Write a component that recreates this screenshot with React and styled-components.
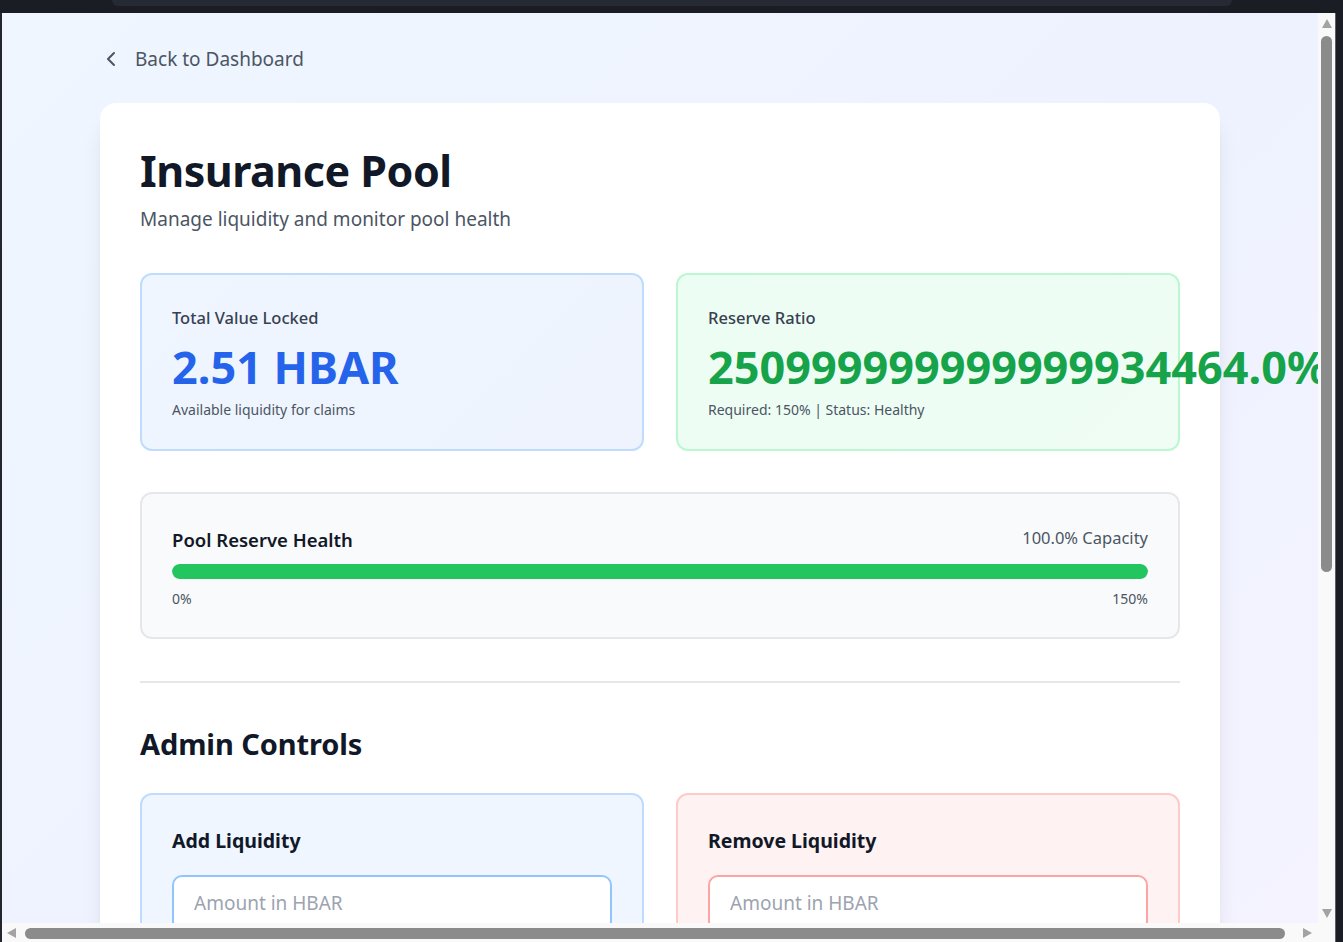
import React from "react";
import styled, { createGlobalStyle } from "styled-components";

const Global = createGlobalStyle`
  html, body { margin: 0; padding: 0; overflow: hidden; background: #1b1d25; }
  body { font-family: "Noto Sans", "Open Sans", sans-serif; }
  * { box-sizing: border-box; }
`;

/* ---------- browser frame ---------- */
const Shell = styled.div`
  width: 1343px;
  height: 942px;
  display: flex;
  flex-direction: column;
  background: #1b1d25;
`;
const TopBar = styled.div`
  height: 13px;
  flex: none;
  padding-left: 112px;
  background: #1b1d25;
`;
const TabEdge = styled.div`
  width: 1120px;
  height: 6px;
  background: #262a34;
  border-radius: 0 0 6px 6px;
`;
const Middle = styled.div`
  height: 910px;
  flex: none;
  display: flex;
`;
const LeftEdge = styled.div`
  width: 2px;
  flex: none;
  background: #24262d;
`;
const RightEdge = styled.div`
  width: 8px;
  flex: none;
  background: #1b1d25;
  border-left: 1px solid #5d5f66;
`;
const Viewport = styled.div`
  width: 1316px;
  flex: none;
  overflow: hidden;
  position: relative;
`;
const VScroll = styled.div`
  width: 17px;
  flex: none;
  background: #f9f9f9;
  display: flex;
  flex-direction: column;
  align-items: center;
  padding: 6px 0 5px;
`;
const ArrowUp = styled.div`
  width: 0;
  height: 0;
  border-left: 5.5px solid transparent;
  border-right: 5.5px solid transparent;
  border-bottom: 9px solid #a3a3a3;
`;
const ArrowDown = styled(ArrowUp)`
  border-bottom: 0;
  border-top: 9px solid #a3a3a3;
  margin-top: auto;
`;
const VThumb = styled.div`
  width: 11px;
  height: ${(p) => p.$len}px;
  margin-top: 8px;
  border-radius: 6px;
  background: #8b8b8b;
`;
const BottomRow = styled.div`
  height: 19px;
  flex: none;
  display: flex;
`;
const HScroll = styled.div`
  flex: 1;
  background: #f9f9f9;
  display: flex;
  align-items: flex-start;
  padding: 5px 0 0 5px;
`;
const ArrowLeft = styled.div`
  width: 0;
  height: 0;
  border-top: 5.5px solid transparent;
  border-bottom: 5.5px solid transparent;
  border-right: 9px solid #a3a3a3;
`;
const ArrowRight = styled.div`
  width: 0;
  height: 0;
  margin-left: 18px;
  border-top: 5.5px solid transparent;
  border-bottom: 5.5px solid transparent;
  border-left: 9px solid #a3a3a3;
`;
const HThumb = styled.div`
  width: ${(p) => p.$len}px;
  height: 11px;
  margin-left: 9px;
  border-radius: 6px;
  background: #8b8b8b;
`;

/* ---------- page ---------- */
const Page = styled.div`
  min-height: 100%;
  padding: 32px 0 48px;
  background: linear-gradient(135deg, #eff6ff 0%, #eef2ff 55%, #f5f3ff 100%);
`;
const Container = styled.div`
  max-width: 1120px;
  margin: 0 auto;
`;
const BackLink = styled.a`
  display: flex;
  width: fit-content;
  align-items: center;
  gap: 12px;
  height: 28px;
  margin-left: -1px;
  color: #4b5563;
  font-size: 19px;
  line-height: 28px;
  text-decoration: none;
  cursor: pointer;
`;
const Card = styled.section`
  margin-top: 30px;
  background: #ffffff;
  border-radius: 16px;
  padding: 40px;
  box-shadow: 0 20px 25px -5px rgba(0, 0, 0, 0.1), 0 8px 10px -6px rgba(0, 0, 0, 0.1);
`;
const Title = styled.h1`
  margin: 0;
  font-size: 43px;
  line-height: 56px;
  font-weight: 700;
  letter-spacing: -0.5px;
  color: #111827;
`;
const Subtitle = styled.p`
  margin: 8px 0 0;
  font-size: 19px;
  line-height: 24px;
  color: #4b5563;
`;
const TwoCols = styled.div`
  display: grid;
  grid-template-columns: 1fr 1fr;
  gap: 32px;
  margin-top: ${(p) => p.$top || 0}px;
`;
const StatCard = styled.div`
  min-width: 0;
  border: 2px solid ${(p) => p.$border};
  background: linear-gradient(135deg, ${(p) => p.$from}, ${(p) => p.$to});
  border-radius: 12px;
  padding: 30px;
`;
const StatLabel = styled.div`
  font-size: 16.5px;
  line-height: 26px;
  font-weight: 500;
  color: #374151;
`;
const StatValue = styled.div`
  margin-top: 8px;
  font-size: 45px;
  line-height: 56px;
  font-weight: 700;
  white-space: nowrap;
  color: ${(p) => p.$color};
`;
const StatNote = styled.div`
  margin-top: 6px;
  font-size: 14px;
  line-height: 18px;
  color: #4b5563;
`;
const HealthCard = styled.div`
  margin-top: 41px;
  background: #f9fafb;
  border: 2px solid #e5e7eb;
  border-radius: 12px;
  padding: 30px;
`;
const HealthHeader = styled.div`
  display: flex;
  justify-content: space-between;
  align-items: flex-start;
  height: 32px;
`;
const HealthTitle = styled.div`
  font-size: 18.5px;
  line-height: 32px;
  font-weight: 600;
  color: #111827;
`;
const Capacity = styled.div`
  font-size: 16.5px;
  line-height: 28px;
  color: #4b5563;
`;
const Track = styled.div`
  margin-top: 8px;
  height: 15px;
  border-radius: 999px;
  background: #e5e7eb;
  overflow: hidden;
`;
const Fill = styled.div`
  height: 100%;
  border-radius: 999px;
  background: #22c55e;
`;
const Scale = styled.div`
  margin-top: 12px;
  display: flex;
  justify-content: space-between;
  font-size: 14px;
  line-height: 16px;
  color: #4b5563;
`;
const Divider = styled.hr`
  margin: 42px 0 0;
  border: 0;
  height: 2px;
  background: #e5e7eb;
`;
const SectionTitle = styled.h2`
  margin: 43px 0 31px;
  font-size: 29px;
  line-height: 36px;
  font-weight: 700;
  letter-spacing: -0.1px;
  color: #111827;
`;
const AdminCard = styled.div`
  border: 2px solid ${(p) => p.$border};
  background: ${(p) => p.$bg};
  border-radius: 12px;
  padding: 30px;
`;
const AdminTitle = styled.h3`
  margin: 0;
  font-size: 19.5px;
  line-height: 32px;
  font-weight: 700;
  color: #111827;
`;
const AmountInput = styled.input`
  display: block;
  width: 100%;
  height: 56px;
  margin-top: 18px;
  padding: 0 20px;
  border: 2px solid ${(p) => p.$border};
  border-radius: 10px;
  background: #ffffff;
  font-family: inherit;
  font-size: 19px;
  color: #111827;
  outline: none;
  &::placeholder { color: #9ca3af; }
`;

const ChevronLeft = () => (
  <svg width="24" height="24" viewBox="0 0 24 24" fill="none" stroke="currentColor"
    strokeWidth="2" strokeLinecap="round" strokeLinejoin="round">
    <path d="M15 18l-6-6 6-6" />
  </svg>
);

export default function App() {
  return (
    <>
      <Global />
      <Shell>
        <TopBar><TabEdge /></TopBar>
        <Middle>
          <LeftEdge />
          <Viewport>
            <Page>
              <Container>
                <BackLink>
                  <ChevronLeft />
                  <span>Back to Dashboard</span>
                </BackLink>
                <Card>
                  <Title>Insurance Pool</Title>
                  <Subtitle>Manage liquidity and monitor pool health</Subtitle>

                  <TwoCols $top={42}>
                    <StatCard $border="#bfdbfe" $from="#eff6ff" $to="#eef3fe">
                      <StatLabel>Total Value Locked</StatLabel>
                      <StatValue $color="#2563eb">2.51 HBAR</StatValue>
                      <StatNote>Available liquidity for claims</StatNote>
                    </StatCard>
                    <StatCard $border="#bbf7d0" $from="#ecfdf3" $to="#effdf5">
                      <StatLabel>Reserve Ratio</StatLabel>
                      <StatValue $color="#16a34a">250999999999999934464.0%</StatValue>
                      <StatNote>Required: 150% | Status: Healthy</StatNote>
                    </StatCard>
                  </TwoCols>

                  <HealthCard>
                    <HealthHeader>
                      <HealthTitle>Pool Reserve Health</HealthTitle>
                      <Capacity>100.0% Capacity</Capacity>
                    </HealthHeader>
                    <Track>
                      <Fill style={{ width: "100%" }} />
                    </Track>
                    <Scale>
                      <span>0%</span>
                      <span>150%</span>
                    </Scale>
                  </HealthCard>

                  <Divider />
                  <SectionTitle>Admin Controls</SectionTitle>
                  <TwoCols>
                    <AdminCard $border="#bfdbfe" $bg="#eff6ff">
                      <AdminTitle>Add Liquidity</AdminTitle>
                      <AmountInput $border="#93c5fd" placeholder="Amount in HBAR" />
                    </AdminCard>
                    <AdminCard $border="#fecaca" $bg="#fef2f2">
                      <AdminTitle>Remove Liquidity</AdminTitle>
                      <AmountInput $border="#fca5a5" placeholder="Amount in HBAR" />
                    </AdminCard>
                  </TwoCols>
                </Card>
              </Container>
            </Page>
          </Viewport>
          <VScroll>
            <ArrowUp />
            <VThumb $len={536} />
            <ArrowDown />
          </VScroll>
          <RightEdge />
        </Middle>
        <BottomRow>
          <LeftEdge />
          <HScroll>
            <ArrowLeft />
            <HThumb $len={1260} />
            <ArrowRight />
          </HScroll>
          <RightEdge />
        </BottomRow>
      </Shell>
    </>
  );
}
